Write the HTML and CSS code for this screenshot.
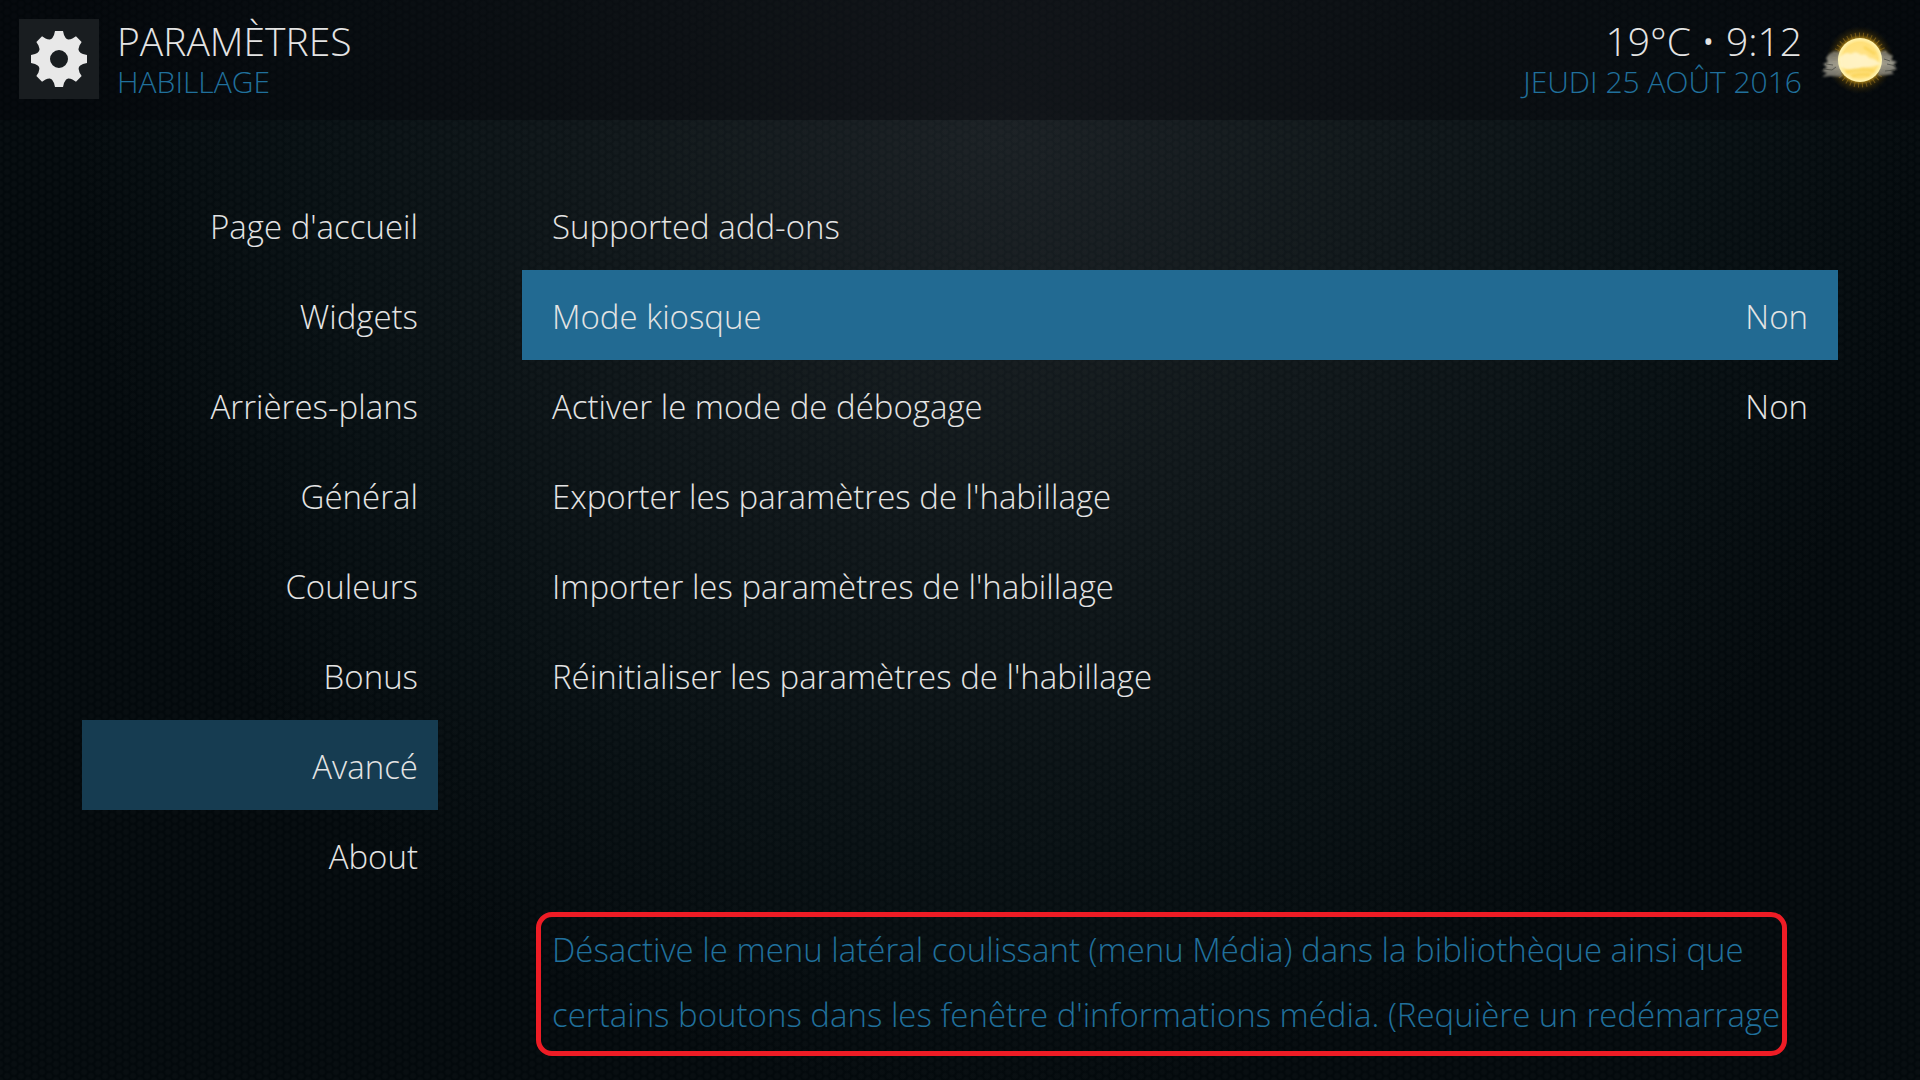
FILE: index.html
```
<!DOCTYPE html>
<html lang="fr">
<head>
    <meta charset="UTF-8">
    <meta name="viewport" content="width=device-width, initial-scale=1.0">
    <title>Paramètres - Habillage</title>
    <link rel="stylesheet" href="styles.css">
</head>
<body>
    <header class="topbar">
        <div class="logo">
            <svg width="56" height="56" viewBox="-28 -28 56 56" aria-hidden="true">
                <defs>
                    <path id="tooth" d="M-9 -15L-9 -19Q-6 -21 -5 -24L-4 -28H4L5 -24Q6 -21 9 -19L9 -15Z"/>
                </defs>
                <g fill="#e8e8e8">
                    <path fill-rule="evenodd" d="M0 -21A21 21 0 1 1 0 21A21 21 0 1 1 0 -21ZM0 -9A9 9 0 1 0 0 9A9 9 0 1 0 0 -9Z"/>
                    <use href="#tooth"/>
                    <use href="#tooth" transform="rotate(45)"/>
                    <use href="#tooth" transform="rotate(90)"/>
                    <use href="#tooth" transform="rotate(135)"/>
                    <use href="#tooth" transform="rotate(180)"/>
                    <use href="#tooth" transform="rotate(225)"/>
                    <use href="#tooth" transform="rotate(270)"/>
                    <use href="#tooth" transform="rotate(315)"/>
                </g>
            </svg>
        </div>
        <div class="heading">
            <h1>PARAMÈTRES</h1>
            <p>HABILLAGE</p>
        </div>
        <div class="heading clock">
            <h2>19°C • 9:12</h2>
            <p>JEUDI 25 AOÛT 2016</p>
        </div>
        <svg class="weather" width="84" height="72" viewBox="-42 -36 84 72" aria-hidden="true">
            <defs>
                <radialGradient id="glow">
                    <stop offset="0.6" stop-color="#f0b820" stop-opacity="0.9"/>
                    <stop offset="0.74" stop-color="#8a6408" stop-opacity="0.4"/>
                    <stop offset="1" stop-color="#403000" stop-opacity="0"/>
                </radialGradient>
                <radialGradient id="sun">
                    <stop offset="0" stop-color="#ffe48c"/>
                    <stop offset="0.8" stop-color="#ffe07a"/>
                    <stop offset="1" stop-color="#fff6b8"/>
                </radialGradient>
                <linearGradient id="cloud" x2="0" y2="1">
                    <stop offset="0" stop-color="#6f6d63"/>
                    <stop offset="0.5" stop-color="#aaa79a"/>
                    <stop offset="1" stop-color="#77756c"/>
                </linearGradient>
                <filter id="soft" x="-20%" y="-50%" width="140%" height="200%">
                    <feGaussianBlur stdDeviation="1"/>
                </filter>
            </defs>
            <circle r="34" fill="url(#glow)"/>
            <circle r="25" fill="none" stroke="#b08420" stroke-width="5" stroke-dasharray="1 3" opacity="0.5"/>
            <g fill="url(#cloud)" filter="url(#soft)" opacity="0.9">
                <path d="M-34 -2L-31 -6L-26 -9L-18 -8V17L-30 16L-38 17L-33 13L-38 11L-33 7L-37 4L-32 2Z"/>
                <path d="M18 -7L25 -10L29 -6L33 -4L31 0L37 2L33 5L37 9L31 11L34 14L27 15L18 16Z"/>
            </g>
            <path d="M-37 9L-28 10L-24 7M-34 4L-27 5M27 4L36 6M25 11L35 10M24 -1L30 1" fill="none" stroke="#45463f" stroke-width="1" opacity="0.7"/>
            <circle r="22" fill="url(#sun)"/>
            <path d="M-21 -2Q-15 -9 -9 -6Q-4 -10 1 -5Q6 -7 9 -2Q15 -2 21 4Q10 8 3 7Q-8 13 -20 7Z" fill="#fff8d8" opacity="0.75" filter="url(#soft)"/>
            <path d="M-14 12Q0 8 14 11M-8 16Q2 13 10 15M4 -13L15 -6" fill="none" stroke="#f7cf48" stroke-width="3" opacity="0.6" filter="url(#soft)"/>
        </svg>
    </header>
    <main class="settings">
        <nav class="menu">
            <a href="#">Page d'accueil</a>
            <a href="#">Widgets</a>
            <a href="#">Arrières-plans</a>
            <a href="#">Général</a>
            <a href="#">Couleurs</a>
            <a href="#">Bonus</a>
            <a href="#" class="active">Avancé</a>
            <a href="#">About</a>
        </nav>
        <section class="panel">
            <div class="options">
                <button type="button">Supported add-ons</button>
                <button type="button" class="focused">Mode kiosque <span>Non</span></button>
                <button type="button">Activer le mode de débogage <span>Non</span></button>
                <button type="button">Exporter les paramètres de l'habillage</button>
                <button type="button">Importer les paramètres de l'habillage</button>
                <button type="button">Réinitialiser les paramètres de l'habillage</button>
            </div>
            <p class="help">Désactive le menu latéral coulissant (menu Média) dans la bibliothèque ainsi que<br>certains boutons dans les fenêtre d'informations média. (Requière un redémarrage</p>
        </section>
    </main>
</body>
</html>
```
FILE: styles.css
```
* {
    box-sizing: border-box;
}
body {
    margin: 0;
    min-height: 100vh;
    color: #e4e4e4;
    font-family: "Open Sans", sans-serif;
    font-weight: 300;
    background-color: #040b0e;
    /* two offset dot layers make the honeycomb, the last one is the light */
    background-image:
        radial-gradient(circle, rgba(255, 255, 255, 0.02) 2px, transparent 4px),
        radial-gradient(circle, rgba(255, 255, 255, 0.02) 2px, transparent 4px),
        radial-gradient(ellipse 48% 90% at 52% 12%, #191f23 0%, #0f1619 40%, #070f12 75%, #03090c 100%);
    background-size: 14px 8px, 14px 8px, 100% 100%;
    background-position: 0 0, 7px 4px, 0 0;
}
h1, h2, p {
    margin: 0;
    font-weight: 300;
}
.topbar {
    display: flex;
    align-items: flex-start;
    height: 120px;
    padding: 19px 18px 0 19px;
    background: rgba(5, 5, 10, 0.4);
}
.logo {
    display: flex;
    align-items: center;
    justify-content: center;
    width: 80px;
    height: 80px;
    margin-right: 18px;
    background: #191d20;
}
.heading h1, .heading h2 {
    font-size: 39px;
    line-height: 44px;
}
.heading p {
    font-size: 30px;
    line-height: 38px;
    color: #20709c;
}
.clock {
    margin-left: auto;
    margin-right: 16px;
    text-align: right;
}
.weather {
    margin-top: 5px;
}
.settings {
    display: flex;
    gap: 84px;
    padding: 60px 82px 0;
}
.menu {
    width: 356px;
}
.menu a {
    display: block;
    height: 90px;
    padding-right: 20px;
    font-size: 33px;
    line-height: 94px;
    text-align: right;
    color: inherit;
    text-decoration: none;
}
.menu .active {
    background: #163c51;
}
.panel {
    flex: 1;
}
.options {
    min-height: 732px;
}
.options button {
    display: flex;
    justify-content: space-between;
    width: 100%;
    height: 90px;
    padding: 0 30px;
    border: none;
    background: none;
    color: inherit;
    font: inherit;
    font-size: 33px;
    line-height: 94px;
    text-align: left;
}
.options .focused {
    background: #226a92;
}
.help {
    width: fit-content;
    margin-left: 14px;
    padding: 0 2px 4px 11px;
    border: 5px solid #ee1c25;
    border-radius: 16px;
    font-size: 33px;
    line-height: 65px;
    color: #20709c;
}
```
